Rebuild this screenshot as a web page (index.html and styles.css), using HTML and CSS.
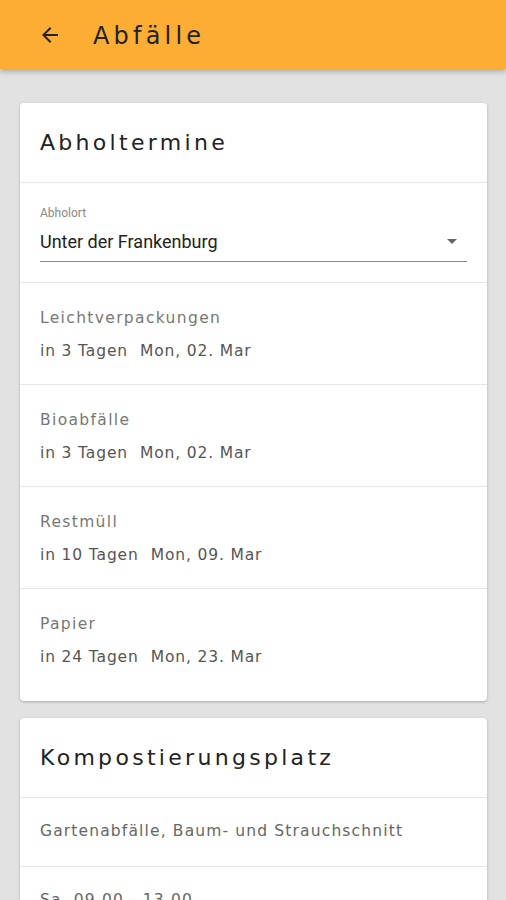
FILE: index.html
```html
<!DOCTYPE html>
<html lang="de">

<head>
    <meta charset="UTF-8">
    <meta name="viewport" content="width=device-width, initial-scale=1.0">
    <title>Abfälle</title>
    <link rel="stylesheet" href="styles.css">
</head>

<body>
    <header class="appbar">
        <svg class="back" width="24" height="24" viewBox="0 0 24 24">
            <path d="M20 11H7.83l5.59-5.59L12 4l-8 8 8 8 1.41-1.41L7.83 13H20v-2z" fill="#222" />
        </svg>
        <h1>Abfälle</h1>
    </header>

    <main class="content">
        <section class="card">
            <h2 class="card-title">Abholtermine</h2>
            <div class="select-row">
                <label class="select-label">Abholort</label>
                <div class="select">
                    <span>Unter der Frankenburg</span>
                    <span class="caret"></span>
                </div>
            </div>
            <div class="item">
                <p class="item-name">Leichtverpackungen</p>
                <p class="item-date">in 3 Tagen<span>Mon, 02. Mar</span></p>
            </div>
            <div class="item">
                <p class="item-name">Bioabfälle</p>
                <p class="item-date">in 3 Tagen<span>Mon, 02. Mar</span></p>
            </div>
            <div class="item">
                <p class="item-name">Restmüll</p>
                <p class="item-date">in 10 Tagen<span>Mon, 09. Mar</span></p>
            </div>
            <div class="item last">
                <p class="item-name">Papier</p>
                <p class="item-date">in 24 Tagen<span>Mon, 23. Mar</span></p>
            </div>
        </section>

        <section class="card">
            <h2 class="card-title">Kompostierungsplatz</h2>
            <div class="info">Gartenabfälle, Baum- und Strauchschnitt</div>
            <div class="info">Sa.  09.00 - 13.00</div>
        </section>
    </main>
</body>

</html>
```
FILE: styles.css
```css
body {
    font-family: 'DejaVu Sans', sans-serif;
    margin: 0;
    padding: 0;
    background-color: #e2e2e2;
    color: #333;
    height: 900px;
    overflow: hidden;
}

.appbar {
    background-color: #fbae33;
    height: 69px;
    display: flex;
    align-items: center;
    padding-left: 38px;
    box-shadow: 0 2px 6px rgba(0, 0, 0, 0.3);
    position: relative;
    z-index: 1;
}

.appbar h1 {
    margin: 2px 0 0 31px;
    font-size: 24px;
    font-weight: 400;
    letter-spacing: 4.2px;
    color: #222;
}

.content {
    padding: 34px 19px 0 20px;
    display: flex;
    flex-direction: column;
    gap: 17px;
}

.card {
    background-color: #fff;
    border-radius: 4px;
    box-shadow: 0 1px 3px rgba(0, 0, 0, 0.25);
}

.card-title {
    margin: 0;
    height: 79px;
    line-height: 80px;
    padding-left: 20px;
    font-size: 22px;
    font-weight: 400;
    letter-spacing: 3.3px;
    color: #222;
    border-bottom: 1px solid #e6e6e6;
}

.select-row {
    padding: 22px 20px 20px;
    border-bottom: 1px solid #e6e6e6;
}

.select-label {
    display: block;
    font-family: 'Roboto', sans-serif;
    font-size: 12px;
    color: #888;
    line-height: 16px;
}

.select {
    display: flex;
    justify-content: space-between;
    align-items: center;
    font-family: 'Roboto', sans-serif;
    font-size: 18px;
    color: #222;
    height: 40px;
    border-bottom: 1px solid #8a8a8a;
}

.caret {
    width: 0;
    height: 0;
    border-left: 5px solid transparent;
    border-right: 5px solid transparent;
    border-top: 5px solid #666;
    margin-right: 10px;
}

.item {
    height: 101px;
    padding: 0 20px;
    border-bottom: 1px solid #e6e6e6;
}

.item.last {
    border-bottom: none;
    height: 112px;
}

.item p {
    margin: 0;
    font-size: 15.5px;
}

.item-name {
    padding-top: 26px;
    color: #777;
    letter-spacing: 1.35px;
}

.item-date {
    padding-top: 15px;
    color: #555;
    letter-spacing: 0.85px;
}

.item-date span {
    margin-left: 12px;
}

.info {
    height: 68px;
    line-height: 66px;
    padding-left: 20px;
    font-size: 15.5px;
    letter-spacing: 1.15px;
    color: #666;
    border-bottom: 1px solid #e6e6e6;
}
```
